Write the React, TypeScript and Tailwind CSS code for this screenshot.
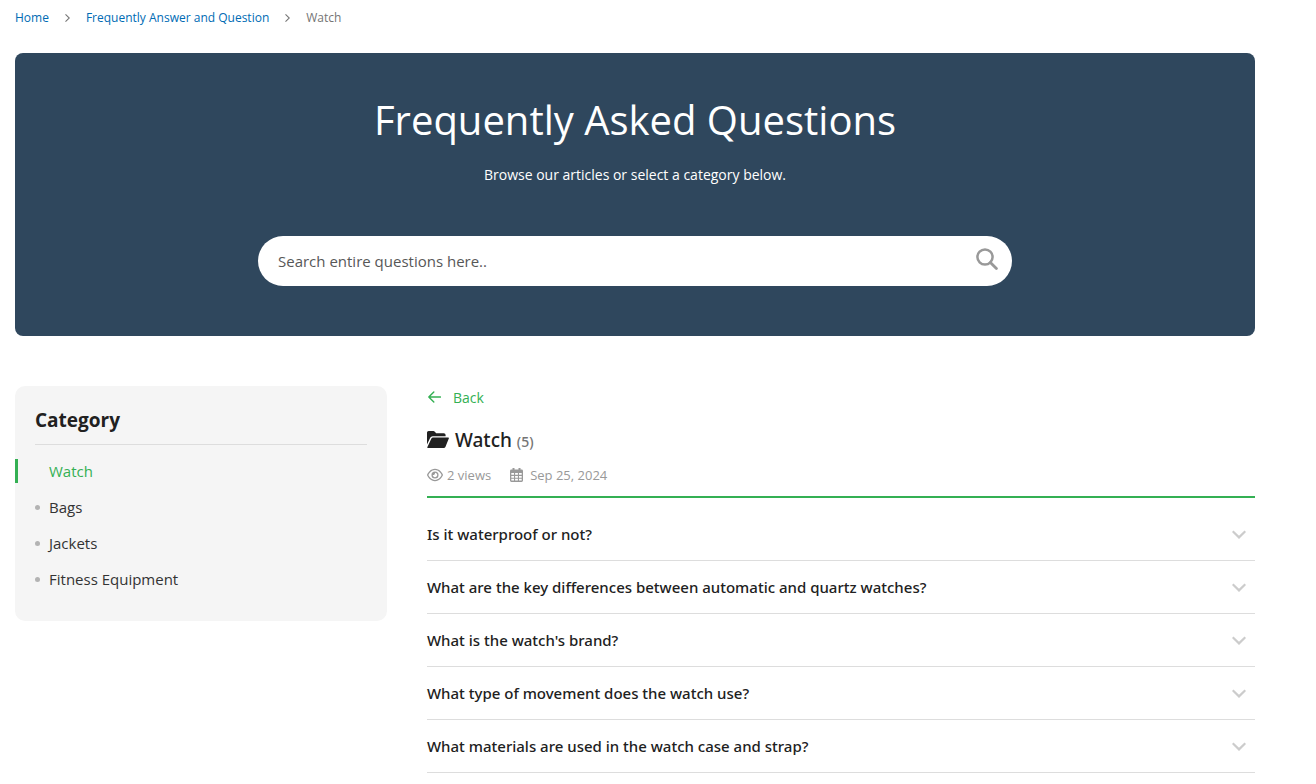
import React, { useState } from "react";
import { FaRegEye } from "react-icons/fa6";

const categories = ["Watch", "Bags", "Jackets", "Fitness Equipment"];

const questions = [
  "Is it waterproof or not?",
  "What are the key differences between automatic and quartz watches?",
  "What is the watch's brand?",
  "What type of movement does the watch use?",
  "What materials are used in the watch case and strap?",
];

function Separator() {
  return (
    <svg className="h-2 w-[5px] text-[#757575]" viewBox="0 0 5 8" fill="none" stroke="currentColor" strokeWidth="1.1" aria-hidden="true">
      <path d="M0.5 0.4 4.3 4 0.5 7.6" />
    </svg>
  );
}

function FolderIcon() {
  return (
    <svg className="mb-0.5 h-[17px] w-[22px]" viewBox="0 0 22 17" fill="currentColor" aria-hidden="true">
      <path d="M0 13.4V1.6Q0 0 1.6 0H6.4Q7.2 0 7.8 .7L9.2 2.2H16.8Q18.6 2.2 18.6 4V5.2H5.6Q4 5.2 3.2 6.7Z" />
      <path d="M.4 16 4.4 7.5Q4.9 6.4 6 6.4H21.2Q22.3 6.4 21.8 7.5L18.4 15.9Q17.9 17 16.8 17H1Q.1 17 .4 16Z" />
    </svg>
  );
}

function CalendarIcon() {
  return (
    <svg className="mr-[7px] ml-[19px] h-3.5 w-[13px]" viewBox="0 0 13 14" fill="currentColor" aria-hidden="true">
      <path
        fillRule="evenodd"
        d="M2.5 0H4.5V1.6H8.5V0H10.5V1.6H11.6Q13 1.6 13 3V12.6Q13 14 11.6 14H1.4Q0 14 0 12.6V3Q0 1.6 1.4 1.6H2.5ZM1.3 5V6.8H4V5ZM5.1 5V6.8H7.9V5ZM9 5V6.8H11.7V5ZM1.3 7.9V9.7H4V7.9ZM5.1 7.9V9.7H7.9V7.9ZM9 7.9V9.7H11.7V7.9ZM1.3 10.8V12.6H4V10.8ZM5.1 10.8V12.6H7.9V10.8ZM9 10.8V12.6H11.7V10.8Z"
      />
    </svg>
  );
}

function Breadcrumbs() {
  return (
    <nav aria-label="Breadcrumb" className="flex items-center gap-4 text-xs leading-4">
      <a href="#" className="text-[#006bb4]">Home</a>
      <Separator />
      <a href="#" className="text-[#006bb4]">Frequently Answer and Question</a>
      <Separator />
      <span className="text-[#757575]">Watch</span>
    </nav>
  );
}

function Hero() {
  return (
    <header className="mt-[27px] flex flex-col items-center rounded-lg bg-[#2f475d] px-5 pt-10 pb-[50px] text-white">
      <h1 className="text-center text-[40px] leading-[54px]">Frequently Asked Questions</h1>
      <p className="mt-[18px] text-center text-sm leading-5">Browse our articles or select a category below.</p>
      <form className="mt-[51px] flex h-[50px] w-full max-w-[754px] items-center rounded-full bg-white pr-3.5 pl-5" onSubmit={(e) => e.preventDefault()}>
        <input
          type="search"
          aria-label="Search questions"
          placeholder="Search entire questions here.."
          className="min-w-0 flex-1 bg-transparent text-[15px] text-[#333] outline-none placeholder:text-[#575757]"
        />
        <button type="submit" aria-label="Search" className="mb-1 text-[#999]">
          <svg className="size-[22px]" viewBox="0 0 22 22" fill="none" stroke="currentColor" strokeWidth="2.5" aria-hidden="true">
            <circle cx="9" cy="9" r="7.6" />
            <path d="M14.4 14.4 20.4 20.4" strokeWidth="2.8" strokeLinecap="round" />
          </svg>
        </button>
      </form>
    </header>
  );
}

function Sidebar() {
  return (
    <aside className="w-[372px] shrink-0 rounded-[10px] bg-[#f5f5f5] pt-[22px] pb-[30px]">
      <h2 className="mx-5 border-b border-[#ddd] pb-3 text-[19px] leading-6 font-bold text-[#212121]">Category</h2>
      <ul className="mt-3.5 flex flex-col gap-3 text-[15px] leading-6">
        {categories.map((name, i) =>
          i === 0 ? (
            <li key={name} className="flex border-l-3 border-[#34b053] pl-[31px]">
              <a href="#" aria-current="page" className="text-[#34b053]">{name}</a>
            </li>
          ) : (
            <li key={name} className="flex items-center gap-[9px] pl-5">
              <span className="size-[5px] rounded-full bg-[#b3b3b3]" />
              <a href="#" className="text-[#333]">{name}</a>
            </li>
          ),
        )}
      </ul>
    </aside>
  );
}

function Question({ text }: { text: string }) {
  const [open, setOpen] = useState(false);
  return (
    <li className="border-b border-[#ddd]">
      <button
        type="button"
        aria-expanded={open}
        onClick={() => setOpen(!open)}
        className="flex w-full items-center justify-between py-3.5 pr-[9px] text-left font-['Noto_Sans',sans-serif] text-[15px] leading-6 font-medium text-[#212121]"
      >
        <span>{text}</span>
        <svg className="h-[9px] w-3.5 shrink-0 text-[#ccc]" viewBox="0 0 14 9" fill="none" stroke="currentColor" strokeWidth="2.2" aria-hidden="true">
          <path d="M0.7 1.2 7 7.4 13.3 1.2" />
        </svg>
      </button>
    </li>
  );
}

function Article() {
  return (
    <main className="min-w-0 flex-1">
      <a href="#" className="flex w-fit items-center gap-3 text-sm leading-6 text-[#34b053]">
        <svg className="mb-0.5 ml-px h-3 w-[13px]" viewBox="0 0 13 12" fill="none" stroke="currentColor" strokeWidth="1.4" strokeLinecap="round" strokeLinejoin="round" aria-hidden="true">
          <path d="M12.4 6H0.8M5.8 1 0.8 6l5 5" />
        </svg>
        Back
      </a>
      <h2 className="mt-4 flex items-center gap-1.5 leading-7 text-[#212121]">
        <FolderIcon />
        <span className="font-['Noto_Sans',sans-serif] text-[19px] font-medium">
          Watch <span className="text-sm text-[#757575]">(5)</span>
        </span>
      </h2>
      <div className="mt-[9px] flex items-center text-[13px] leading-6 text-[#999]">
        <FaRegEye className="mr-1 size-4" />
        <span>2 views</span>
        <CalendarIcon />
        <time dateTime="2024-09-25">Sep 25, 2024</time>
      </div>
      <ul className="mt-[9px] border-t-2 border-[#34b053] pt-2.5">
        {questions.map((text) => (
          <Question key={text} text={text} />
        ))}
      </ul>
    </main>
  );
}

export default function App() {
  return (
    <div className="max-w-[1270px] bg-white px-[15px] pt-2.5 font-['Open_Sans','Noto_Sans',sans-serif]">
      <Breadcrumbs />
      <Hero />
      <div className="mt-[50px] flex items-start gap-10">
        <Sidebar />
        <Article />
      </div>
    </div>
  );
}
